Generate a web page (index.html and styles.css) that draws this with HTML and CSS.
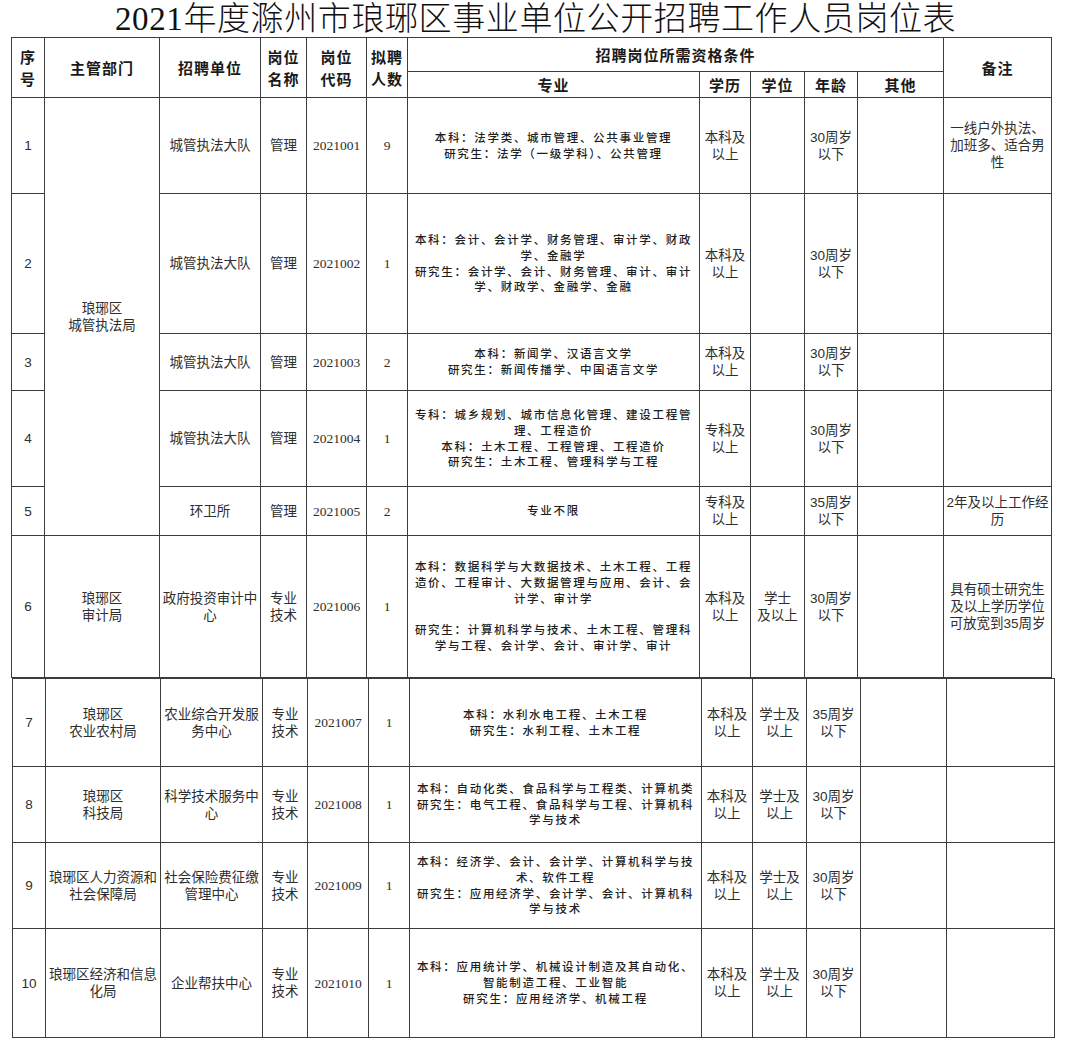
FILE: index.html
```html
<!DOCTYPE html>
<html lang="zh-CN">
<head>
<meta charset="utf-8">
<title>2021年度滁州市琅琊区事业单位公开招聘工作人员岗位表</title>
<link rel="stylesheet" href="styles.css">
</head>
<body>
<div class="page">
  <h1 class="title">2021年度滁州市琅琊区事业单位公开招聘工作人员岗位表</h1>

  <table class="sheet sheet-top">
    <colgroup>
      <col class="c-no"><col class="c-dept"><col class="c-unit"><col class="c-name"><col class="c-code"><col class="c-num">
      <col class="c-major"><col class="c-edu"><col class="c-deg"><col class="c-age"><col class="c-other"><col class="c-note">
    </colgroup>
    <thead>
      <tr class="hr1">
        <th rowspan="2">序<br>号</th>
        <th rowspan="2">主管部门</th>
        <th rowspan="2">招聘单位</th>
        <th rowspan="2">岗位<br>名称</th>
        <th rowspan="2">岗位<br>代码</th>
        <th rowspan="2">拟聘<br>人数</th>
        <th colspan="5">招聘岗位所需资格条件</th>
        <th rowspan="2">备注</th>
      </tr>
      <tr class="hr2">
        <th>专业</th>
        <th>学历</th>
        <th>学位</th>
        <th>年龄</th>
        <th>其他</th>
      </tr>
    </thead>
    <tbody>
      <tr class="r1">
        <td>1</td>
        <td rowspan="5">琅琊区<br>城管执法局</td>
        <td>城管执法大队</td>
        <td>管理</td>
        <td class="code">2021001</td>
        <td class="code">9</td>
        <td class="major">本科：法学类、城市管理、公共事业管理<br>研究生：法学（一级学科）、公共管理</td>
        <td>本科及<br>以上</td>
        <td></td>
        <td>30周岁<br>以下</td>
        <td></td>
        <td>一线户外执法、<br>加班多、适合男<br>性</td>
      </tr>
      <tr class="r2">
        <td>2</td>
        <td>城管执法大队</td>
        <td>管理</td>
        <td class="code">2021002</td>
        <td class="code">1</td>
        <td class="major">本科：会计、会计学、财务管理、审计学、财政<br>学、金融学<br>研究生：会计学、会计、财务管理、审计、审计<br>学、财政学、金融学、金融</td>
        <td>本科及<br>以上</td>
        <td></td>
        <td>30周岁<br>以下</td>
        <td></td>
        <td></td>
      </tr>
      <tr class="r3">
        <td>3</td>
        <td>城管执法大队</td>
        <td>管理</td>
        <td class="code">2021003</td>
        <td class="code">2</td>
        <td class="major">本科：新闻学、汉语言文学<br>研究生：新闻传播学、中国语言文学</td>
        <td>本科及<br>以上</td>
        <td></td>
        <td>30周岁<br>以下</td>
        <td></td>
        <td></td>
      </tr>
      <tr class="r4">
        <td>4</td>
        <td>城管执法大队</td>
        <td>管理</td>
        <td class="code">2021004</td>
        <td class="code">1</td>
        <td class="major">专科：城乡规划、城市信息化管理、建设工程管<br>理、工程造价<br>本科：土木工程、工程管理、工程造价<br>研究生：土木工程、管理科学与工程</td>
        <td>专科及<br>以上</td>
        <td></td>
        <td>30周岁<br>以下</td>
        <td></td>
        <td></td>
      </tr>
      <tr class="r5">
        <td>5</td>
        <td>环卫所</td>
        <td>管理</td>
        <td class="code">2021005</td>
        <td class="code">2</td>
        <td class="major">专业不限</td>
        <td>专科及<br>以上</td>
        <td></td>
        <td>35周岁<br>以下</td>
        <td></td>
        <td>2年及以上工作经<br>历</td>
      </tr>
      <tr class="r6">
        <td>6</td>
        <td>琅琊区<br>审计局</td>
        <td>政府投资审计中<br>心</td>
        <td>专业<br>技术</td>
        <td class="code">2021006</td>
        <td class="code">1</td>
        <td class="major">本科：数据科学与大数据技术、土木工程、工程<br>造价、工程审计、大数据管理与应用、会计、会<br>计学、审计学<br><br>研究生：计算机科学与技术、土木工程、管理科<br>学与工程、会计学、会计、审计学、审计</td>
        <td>本科及<br>以上</td>
        <td>学士<br>及以上</td>
        <td>30周岁<br>以下</td>
        <td></td>
        <td>具有硕士研究生<br>及以上学历学位<br>可放宽到35周岁</td>
      </tr>
    </tbody>
  </table>

  <table class="sheet sheet-bottom">
    <colgroup>
      <col class="d-no"><col class="d-dept"><col class="d-unit"><col class="d-name"><col class="d-code"><col class="d-num">
      <col class="d-major"><col class="d-edu"><col class="d-deg"><col class="d-age"><col class="d-other"><col class="d-note">
    </colgroup>
    <tbody>
      <tr class="r7">
        <td>7</td>
        <td>琅琊区<br>农业农村局</td>
        <td>农业综合开发服<br>务中心</td>
        <td>专业<br>技术</td>
        <td class="code">2021007</td>
        <td class="code">1</td>
        <td class="major">本科：水利水电工程、土木工程<br>研究生：水利工程、土木工程</td>
        <td>本科及<br>以上</td>
        <td>学士及<br>以上</td>
        <td>35周岁<br>以下</td>
        <td></td>
        <td></td>
      </tr>
      <tr class="r8">
        <td>8</td>
        <td>琅琊区<br>科技局</td>
        <td>科学技术服务中<br>心</td>
        <td>专业<br>技术</td>
        <td class="code">2021008</td>
        <td class="code">1</td>
        <td class="major">本科：自动化类、食品科学与工程类、计算机类<br>研究生：电气工程、食品科学与工程、计算机科<br>学与技术</td>
        <td>本科及<br>以上</td>
        <td>学士及<br>以上</td>
        <td>30周岁<br>以下</td>
        <td></td>
        <td></td>
      </tr>
      <tr class="r9">
        <td>9</td>
        <td>琅琊区人力资源和<br>社会保障局</td>
        <td>社会保险费征缴<br>管理中心</td>
        <td>专业<br>技术</td>
        <td class="code">2021009</td>
        <td class="code">1</td>
        <td class="major">本科：经济学、会计、会计学、计算机科学与技<br>术、软件工程<br>研究生：应用经济学、会计学、会计、计算机科<br>学与技术</td>
        <td>本科及<br>以上</td>
        <td>学士及<br>以上</td>
        <td>30周岁<br>以下</td>
        <td></td>
        <td></td>
      </tr>
      <tr class="r10">
        <td>10</td>
        <td>琅琊区经济和信息<br>化局</td>
        <td>企业帮扶中心</td>
        <td>专业<br>技术</td>
        <td class="code">2021010</td>
        <td class="code">1</td>
        <td class="major">本科：应用统计学、机械设计制造及其自动化、<br>智能制造工程、工业智能<br>研究生：应用经济学、机械工程</td>
        <td>本科及<br>以上</td>
        <td>学士及<br>以上</td>
        <td>30周岁<br>以下</td>
        <td></td>
        <td></td>
      </tr>
    </tbody>
  </table>
</div>
</body>
</html>
```

FILE: styles.css
```css
html, body {
  margin: 0;
  padding: 0;
  background: #ffffff;
}

.page {
  width: 1080px;
  height: 1054px;
  overflow: hidden;
}

.title {
  margin: 0;
  height: 37px;
  padding-left: 115px;
  font-family: "Liberation Serif", "Noto Sans CJK SC", serif;
  font-weight: 300;
  font-size: 33px;
  line-height: 38px;
  letter-spacing: 0.6px;
  color: #111;
  white-space: nowrap;
}

.sheet {
  border-collapse: collapse;
  table-layout: fixed;
  font-family: "Liberation Sans", "Noto Sans CJK SC", sans-serif;
  font-size: 13.5px;
  line-height: 17px;
  color: #2e2e2e;
}

.sheet-top {
  margin-left: 11px;
  width: 1040px;
}

.sheet-bottom {
  margin-left: 12px;
  width: 1042px;
}

.sheet th,
.sheet td {
  border: 1px solid #3c3c3c;
  padding: 0;
  text-align: center;
  vertical-align: middle;
  white-space: nowrap;
  overflow: hidden;
}

.sheet th {
  font-family: "Noto Sans CJK SC", sans-serif;
  font-weight: 700;
  font-size: 15px;
  line-height: 22px;
  letter-spacing: 1px;
  color: #1a1a1a;
}

.sheet td.code {
  font-family: "Liberation Serif", "Noto Sans CJK SC", serif;
  font-size: 13.5px;
}

.sheet td.major {
  font-family: "Noto Sans CJK SC", sans-serif;
  font-weight: 500;
  font-size: 11.5px;
  line-height: 15.7px;
  letter-spacing: 1.7px;
  color: #1e1e1e;
}

/* top table columns */
.c-no { width: 33px; }
.c-dept { width: 115px; }
.c-unit { width: 101px; }
.c-name { width: 46px; }
.c-code { width: 60px; }
.c-num { width: 41px; }
.c-major { width: 292px; }
.c-edu { width: 51px; }
.c-deg { width: 54px; }
.c-age { width: 53px; }
.c-other { width: 86px; }
.c-note { width: 108px; }

/* bottom table columns */
.d-no { width: 33px; }
.d-dept { width: 115px; }
.d-unit { width: 102px; }
.d-name { width: 45px; }
.d-code { width: 61px; }
.d-num { width: 41px; }
.d-major { width: 292px; }
.d-edu { width: 51px; }
.d-deg { width: 54px; }
.d-age { width: 54px; }
.d-other { width: 86px; }
.d-note { width: 108px; }

/* row heights */
.hr1 { height: 34px; }
.hr2 { height: 26px; }
.r1 { height: 96px; }
.r2 { height: 140px; }
.r3 { height: 57px; }
.r4 { height: 96px; }
.r5 { height: 49px; }
.r6 { height: 142px; }
.r7 { height: 88px; }
.r8 { height: 76px; }
.r9 { height: 86px; }
.r10 { height: 109px; }
```
